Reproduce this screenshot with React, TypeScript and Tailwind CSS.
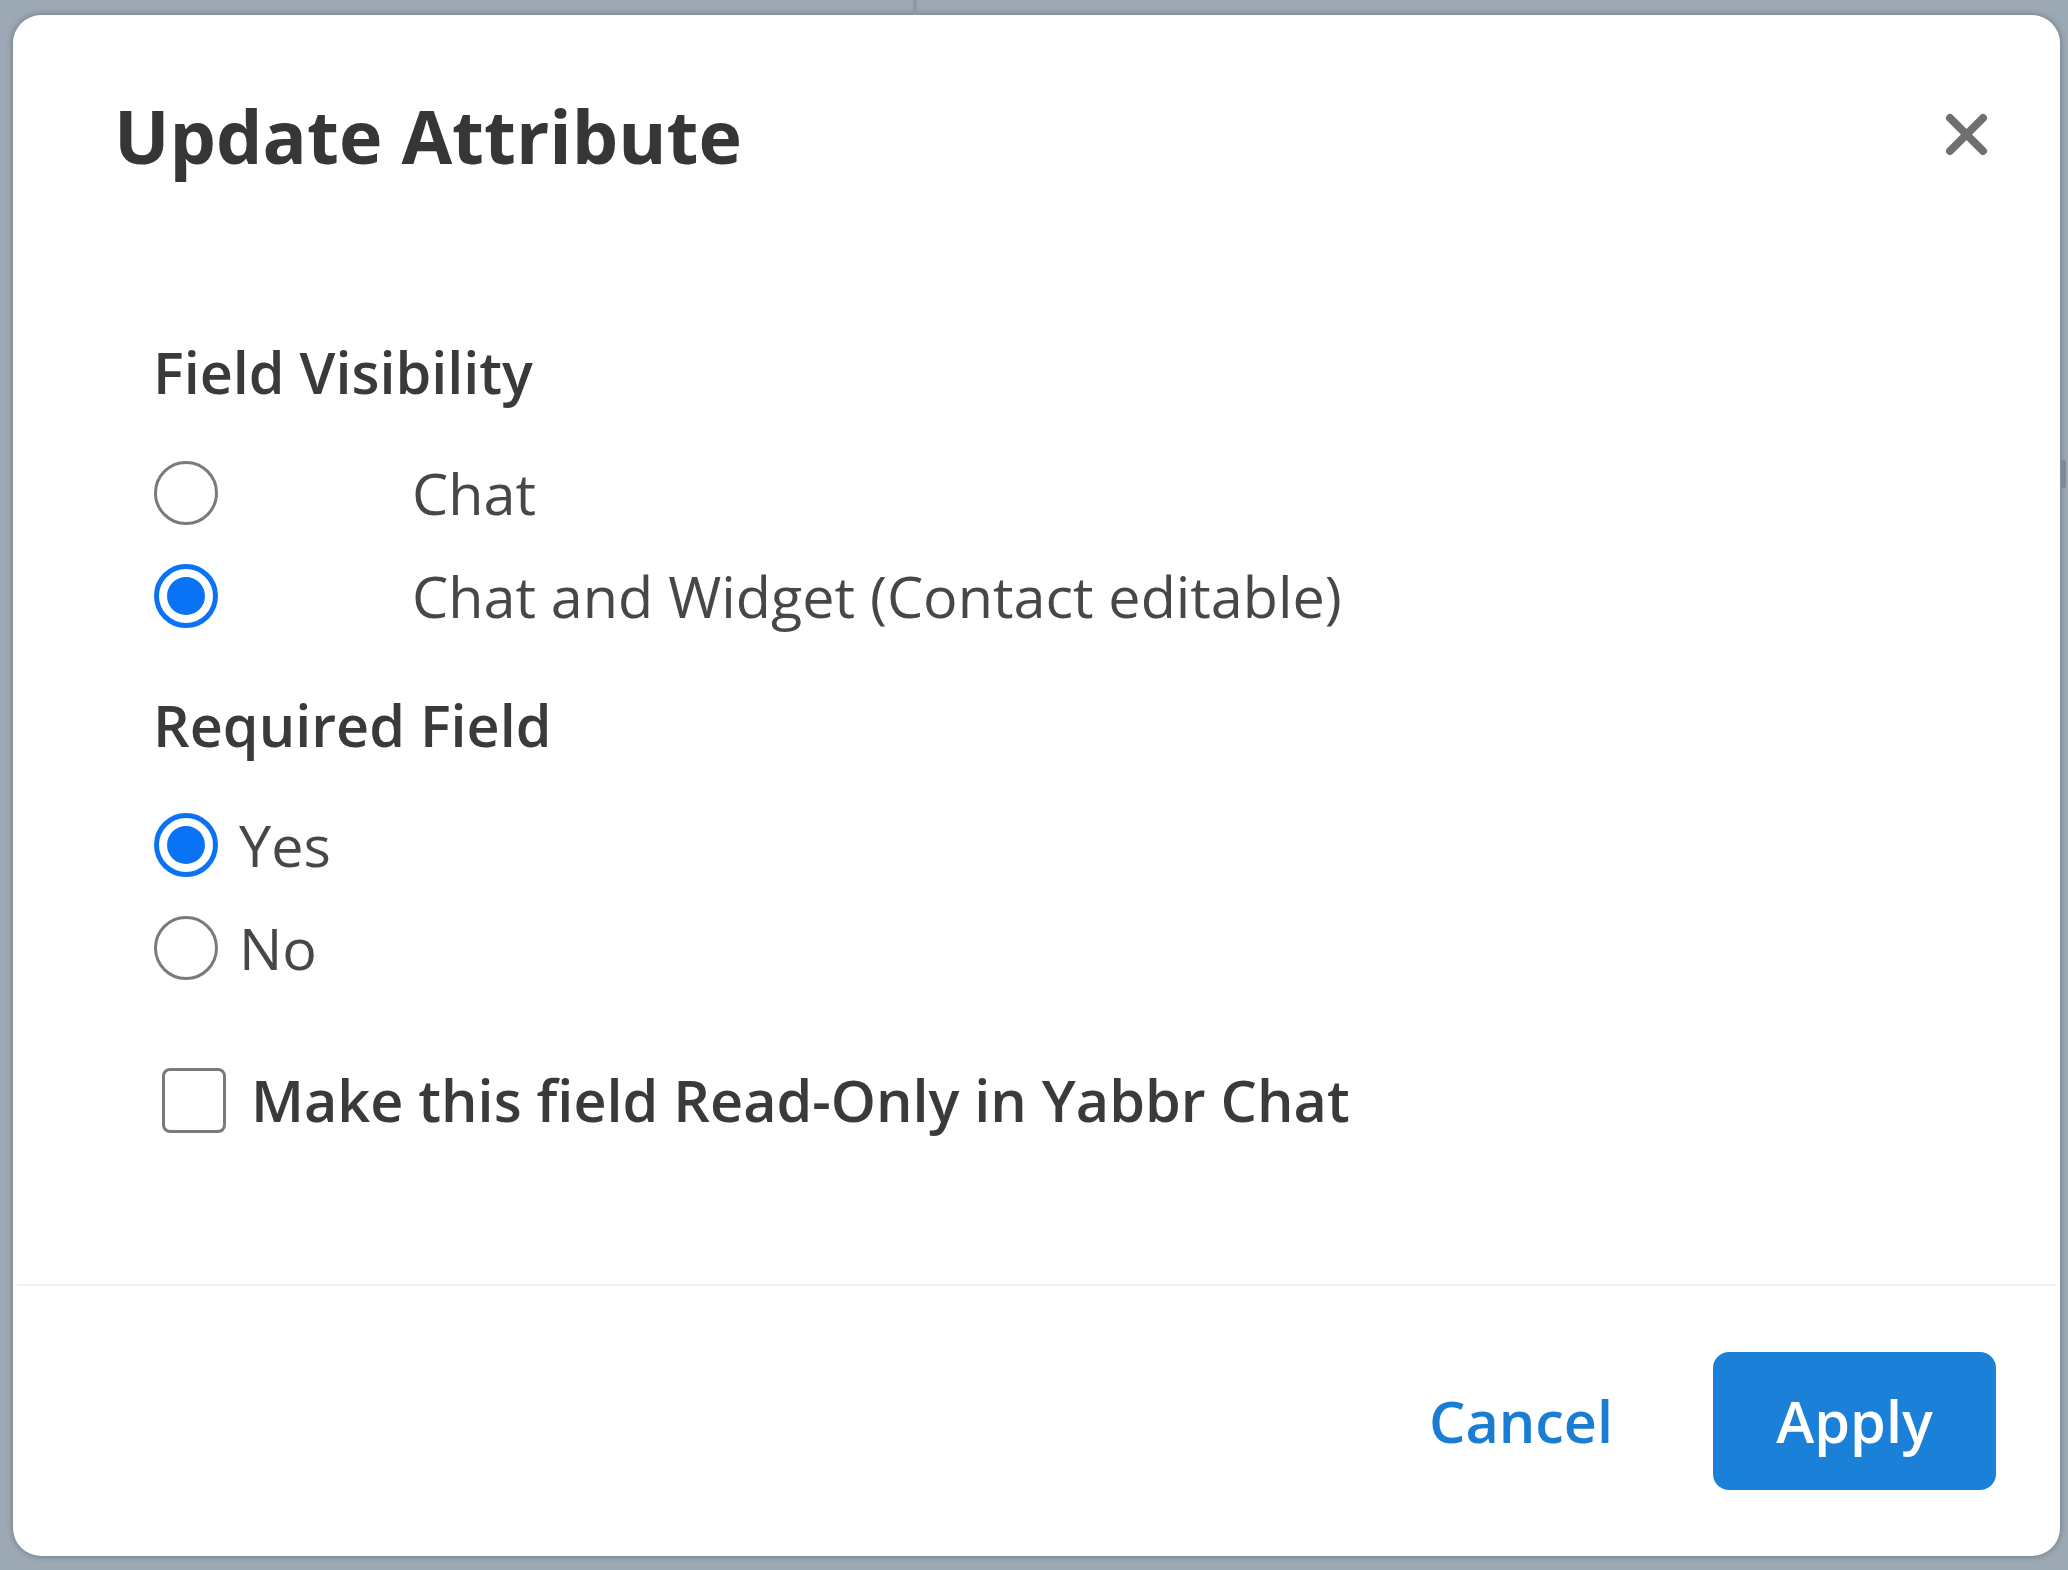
import React from "react";

function Radio({ checked }: { checked: boolean }) {
  if (checked) {
    return (
      <div className="ml-[4px] flex h-[64px] w-[64px] shrink-0 items-center justify-center rounded-full border-[5px] border-[#0a72f5] bg-white">
        <div className="h-[38px] w-[38px] rounded-full bg-[#0a72f5]" />
      </div>
    );
  }
  return <div className="ml-[4px] h-[64px] w-[64px] shrink-0 rounded-full border-[3px] border-[#7a7a7a] bg-white" />;
}

export default function App() {
  return (
    <div
      className="relative h-[1570px] w-[2068px] overflow-hidden bg-[#9ca8b3] pl-[13px] pt-[15px]"
      style={{ fontFamily: '"Open Sans", "Noto Sans", sans-serif' }}
    >
      <div className="absolute left-[913px] top-0 h-[15px] w-[4px] bg-[#8e99a4]" />
      <div className="absolute left-[2061px] top-[460px] h-[28px] w-[5px] rounded-sm bg-[#7f8a95]" />
      <div className="flex h-[1541px] w-[2047px] flex-col rounded-[28px] bg-white shadow-[0_0_6px_rgba(40,50,60,0.45)]">
        <div className="flex items-start justify-between pl-[101px] pr-[72px] pt-[72px]">
          <h1 className="text-[73.5px] font-bold leading-[97px] text-[#363636]">Update Attribute</h1>
          <div className="flex h-[94px] w-[43px] items-center justify-center">
            <svg width="43" height="43" viewBox="0 0 43 43">
              <path d="M5 5 L38 38 M38 5 L5 38" stroke="#707070" strokeWidth="8" strokeLinecap="round" />
            </svg>
          </div>
        </div>

        <div className="flex flex-col pl-[137px] pt-[148px]">
          <div className="ml-[3px] text-[57.5px] font-semibold leading-[80px] text-[#3a3a3a]">Field Visibility</div>
          <div className="mt-[41px] flex h-[80px] items-center">
            <Radio checked={false} />
            <span className="ml-[194px] text-[57.5px] leading-[80px] text-[#474747]">Chat</span>
          </div>
          <div className="mt-[23px] flex h-[80px] items-center">
            <Radio checked={true} />
            <span className="ml-[194px] text-[57.5px] leading-[80px] text-[#474747]">Chat and Widget (Contact editable)</span>
          </div>

          <div className="ml-[3px] mt-[49px] text-[57.5px] font-semibold leading-[80px] text-[#3a3a3a]">Required Field</div>
          <div className="mt-[40px] flex h-[80px] items-center">
            <Radio checked={true} />
            <span className="ml-[21px] text-[57.5px] leading-[80px] text-[#474747]">Yes</span>
          </div>
          <div className="mt-[23px] flex h-[80px] items-center">
            <Radio checked={false} />
            <span className="ml-[21px] text-[57.5px] leading-[80px] text-[#474747]">No</span>
          </div>

          <div className="mt-[72px] flex h-[80px] items-center">
            <div className="ml-[12px] h-[65px] w-[64px] shrink-0 rounded-[8px] border-[3px] border-[#7a7a7a] bg-white" />
            <span className="ml-[25px] text-[57.5px] font-semibold leading-[80px] text-[#3a3a3a]">
              Make this field Read-Only in Yabbr Chat
            </span>
          </div>
        </div>

        <div className="mx-[4px] mt-[144px] h-[2px] bg-[#f0f0f0]" />

        <div className="flex flex-1 items-start justify-end pr-[64px] pt-[66px]">
          <button className="mr-[100px] mt-[24px] h-[90px] text-[57.5px] font-semibold leading-[90px] text-[#1a7cd2]">Cancel</button>
          <button className="h-[138px] w-[283px] rounded-[16px] bg-[#1b80d8] text-[57.5px] font-semibold text-white">Apply</button>
        </div>
      </div>
    </div>
  );
}
